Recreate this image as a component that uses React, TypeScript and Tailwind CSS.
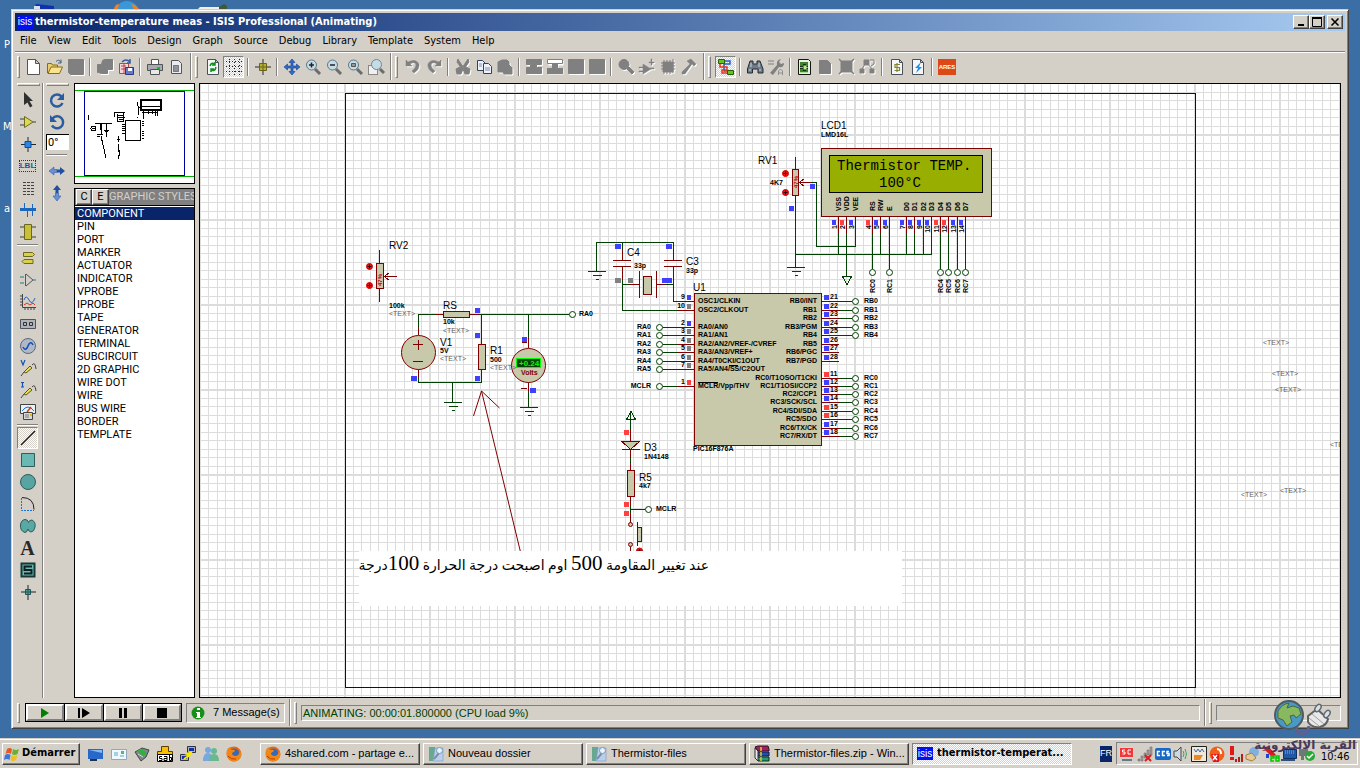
import type { ReactNode } from "react";

const UI = "font-['DejaVu_Sans_Condensed','DejaVu_Sans',sans-serif]";
const HATCH = "bg-[repeating-conic-gradient(#ffffff_0_25%,#d4d0c8_0_50%)] bg-[length:2px_2px]";
const RAISED = "border border-t-white border-l-white border-r-[#404040] border-b-[#404040] bg-[#d4d0c8] shadow-[inset_-1px_-1px_0_#808080]";
const SUNKEN = "border border-t-[#808080] border-l-[#808080] border-r-white border-b-white";

function Icon({ children, size = "size-4" }: { children: ReactNode; size?: string }) {
  return (
    <svg viewBox="0 0 16 16" className={`${size} shrink-0 overflow-visible`} fill="none" aria-hidden="true">
      {children}
    </svg>
  );
}

function Tool({ label, children, pressed = false }: { label: string; children: ReactNode; pressed?: boolean }) {
  return (
    <button
      type="button"
      aria-label={label}
      className={`flex h-[22px] w-[21px] shrink-0 items-center justify-center ${pressed ? `${SUNKEN} ${HATCH}` : ""}`}
    >
      <Icon>{children}</Icon>
    </button>
  );
}

function Disabled({ label, children }: { label: string; children: ReactNode }) {
  return (
    <Tool label={label}>
      <g transform="translate(1 1)" fill="#fff" stroke="#fff">{children}</g>
      <g fill="#808080" stroke="#808080">{children}</g>
    </Tool>
  );
}

function Sep() {
  return (
    <span className="flex w-2 shrink-0 justify-center">
      <span className="h-[18px] w-[2px] border-l border-[#808080] bg-white" />
    </span>
  );
}

function Grip({ h = "h-[22px]" }: { h?: string }) {
  return <span className={`${h} w-[3px] shrink-0 border border-t-white border-l-white border-r-[#808080] border-b-[#808080]`} />;
}

function BandEnd() {
  return (
    <span className="flex w-4 shrink-0 items-center justify-between pl-1 pr-1">
      <span className="h-[27px] w-[2px] border-l border-[#808080] bg-white" />
      <Grip />
    </span>
  );
}

const Page = () => <path d="M2.500.500h8l3 3v12h-11z M10.500.500v3h3" fill="#f4f6fa" stroke="#4a5058" />;

const Lens = ({ children }: { children?: ReactNode }) => (
  <>
    <path d="M10 10l5 5" stroke="#6c6c6c" strokeWidth="3" />
    <circle cx="6.500" cy="6" r="5" fill="#c4dce8" stroke="#5f7684" />
    {children}
  </>
);

function MainToolbar() {
  return (
    <div className="flex h-[30px] items-center overflow-hidden pb-[3px]" role="toolbar" aria-label="Main toolbar">
      <span className="flex w-2 shrink-0 pl-[2px]"><Grip /></span>
      <Tool label="New"><path d="M1.500.500h8l4 4v11h-12z M9.500.500v4h4" fill="#fff" stroke="#555" /></Tool>
      <Tool label="Open">
        <path d="M.500 14V4.500h4l1 1.500h5v3" fill="#e8d070" stroke="#8a6a10" />
        <path d="M1 14.500L4 8h11.500l-3 6.500z" fill="#f8e48c" stroke="#8a6a10" />
        <path d="M9 2.500q3-3 5 1m0-3v3.500h-3" stroke="#406080" />
      </Tool>
      <Disabled label="Save"><path d="M.500.500h15v15h-13l-2-2z" /></Disabled>
      <Sep />
      <Disabled label="Import section"><path d="M5.500 1.500l2-1h8v10h-5v4h-6l-4-1v-8h4z" /></Disabled>
      <Tool label="Export section">
        <path d="M1.500 4.500h9v10h-9z" fill="#f3dada" stroke="#b04848" />
        <path d="M4 3Q8-1 12 3m0-3v4H9" stroke="#2f5ca8" strokeWidth="1.500" />
        <path d="M3 7h5M3 10h5M6 5v9" stroke="#c04040" />
        <path d="M7.500 8.500h8v7h-8z" fill="#6878d0" stroke="#303878" />
        <path d="M10 9h4v3h-4z" fill="#fff" />
      </Tool>
      <Sep />
      <Tool label="Print">
        <path d="M4.500.500h7v5h-7z" fill="#fff" stroke="#555" />
        <path d="M.500 5.500h15v6H.500z" fill="#a8acb0" stroke="#505458" />
        <path d="M3.500 10.500h9v5h-9z" fill="#e8e8e8" stroke="#505458" />
        <path d="M10 8h3v2h-3z" fill="#18c018" />
      </Tool>
      <Tool label="Set print area">
        <path d="M3.500 1.500h7l3 3v10h-10z" fill="#e8ecf0" stroke="#555" />
        <path d="M5.500 6.500h5v6h-5z" fill="#909498" stroke="#333" strokeDasharray="1 1" />
      </Tool>
      <BandEnd />
      <Tool label="Redraw">
        <Page />
        <path d="M5 7q1-4 5-2m0-2v3H7M11 8q-1 5-5 3m0 2v-3h3" stroke="#10901c" strokeWidth="1.500" />
      </Tool>
      <Tool label="Toggle grid" pressed>
        <path d="M0 2.500h16M0 7.500h16M0 12.500h16" stroke="#222" strokeDasharray="1 2" />
        <path d="M3.500 0v16M8.500 0v16M13.500 0v16" stroke="#222" strokeDasharray="1 2" />
      </Tool>
      <Sep />
      <Tool label="False origin">
        <path d="M8 0v16M0 8h16" stroke="#2c2c20" />
        <path d="M4.500 4.500h7v7h-7z" fill="#b8b030" stroke="#68641c" />
        <path d="M8 5v6M5 8h6" stroke="#68641c" />
      </Tool>
      <Sep />
      <Tool label="Pan">
        <path d="M8 0l3 3.500H9V7h3.500V5L16 8l-3.500 3V9H9v3.500h2L8 16l-3-3.500h2V9H3.500v2L0 8l3.500-3v2H7V3.500H5z" fill="#2e6cd0" stroke="#163c84" strokeWidth=".6" />
      </Tool>
      <Tool label="Zoom in"><Lens><path d="M4 6h5M6.500 3.500v5" stroke="#222" strokeWidth="1.500" /></Lens></Tool>
      <Tool label="Zoom out"><Lens><path d="M4 6h5" stroke="#222" strokeWidth="1.500" /></Lens></Tool>
      <Tool label="Zoom all"><Lens><path d="M4.500 4.500h4v3h-4z" fill="#999" stroke="#555" /></Lens></Tool>
      <Tool label="Zoom area">
        <path d="M.500 6.500h9v9h-9z" fill="#f0f0f0" stroke="#333" strokeDasharray="1 1" />
        <path d="M12 10l4 4" stroke="#6c6c6c" strokeWidth="3" />
        <circle cx="8.500" cy="5.500" r="5" fill="#c4dce8" stroke="#6e8696" />
      </Tool>
      <BandEnd />
      <Disabled label="Undo"><path d="M1 1v6h6L5 5q5-3 6 1 0 3-4 6l2 2q6-4 5-9-3-6-11-2z" strokeWidth=".5" /></Disabled>
      <Disabled label="Redo"><path d="M15 1v6H9l2-2Q6 2 5 6q0 3 4 6l-2 2Q1 10 2 5q3-6 11-2z" strokeWidth=".5" /></Disabled>
      <Sep />
      <Disabled label="Cut">
        <path d="M3 0l6 9-2 1L2 3zM13 0L7 9l2 1 5-7z" />
        <path d="M1 10l4-2 3 2-2 5H2zM15 10l-4-2-3 2 2 5h4z" />
      </Disabled>
      <Tool label="Copy">
        <path d="M1.500 1.500h5l3 3v7h-8z" fill="#eef2f8" stroke="#304060" />
        <path d="M7.500 4.500h5l3 3v7h-8z" fill="#eef2f8" stroke="#304060" />
        <path d="M3 5h3M3 7h3M9 9h5M9 11h5" stroke="#7890b0" />
      </Tool>
      <Disabled label="Paste"><path d="M1 3l4-2h5l2 2v3l3 3v6H7l-1-2H1z" /></Disabled>
      <Sep />
      <Disabled label="Block copy"><path d="M.500.500h15v5h-5v3h5v6H.500v-6h4v-3h-4z" /></Disabled>
      <Tool label="Block move">
        <path d="M1.500 1.500h15v5h-5v3h5v6h-15v-6h4v-3h-4z" fill="#fff" />
        <path d="M.500.500h15v4H.500z" stroke="#808080" fill="#fff" />
        <path d="M5 4h6v5h5v6H0V9h5z" fill="#808080" />
      </Tool>
      <Disabled label="Block rotate"><path d="M.500.500h15v14H.500z" /></Disabled>
      <Disabled label="Block delete"><path d="M.500.500h15v14H.500z" /></Disabled>
      <Sep />
      <Disabled label="Pick parts"><circle cx="6" cy="5.500" r="5" /><path d="M9 10l2-2 5 5-2 2z" /></Disabled>
      <Disabled label="Make device"><path d="M4 5l8 5-8 5zM0 8h4v1H0zM0 12h4v1H0zM11 9h4v1h-4zM12 0h1v6h-1zM10 3h5v1h-5z" strokeWidth=".5" /></Disabled>
      <Disabled label="Packaging tool">
        <path d="M3 3h10v10H3z" />
        <path d="M1 4h14M1 7h14M1 10h14M4 1v14M7 1v14M10 1v14M13 0v14" />
      </Disabled>
      <Disabled label="Decompose"><path d="M6 2l4-2 5 5-2 2-2-2-7 10-3 0 0-2 8-8z" strokeWidth=".5" /></Disabled>
      <BandEnd />
      <Tool label="Wire autorouter" pressed>
        <path d="M6 2h6v3H6v7h4" stroke="#2060c8" strokeWidth="1.500" />
        <path d="M2 5v3h7v3H4v3h6" stroke="#e03818" strokeWidth="1.500" />
        <path d="M.500.500h6v4h-6zM9.500 11.500h6v4h-6z" fill="#60c820" stroke="#286008" />
      </Tool>
      <Sep />
      <Tool label="Search and tag">
        <path d="M3 2h3v3h4V2h3l3 8v4h-5v-4H5.500v4H.500v-4z" fill="#707c88" stroke="#222c38" />
        <path d="M2 11h2M12 11h2M4 4v4M12 4v4" stroke="#d0d8e0" />
      </Tool>
      <Tool label="Property assignment">
        <path d="M0 2h6M0 5h6" stroke="#808080" />
        <path d="M2 14l7-8q-1-5 4-6l-2 3 2 2 3-1q0 5-5 4l-6 8z" fill="#808080" />
        <path d="M10.500 16v-4l2-2 2 2v4m-4-2h4" stroke="#909090" />
      </Tool>
      <Sep />
      <Tool label="Design explorer">
        <path d="M1.500.500h10l2 2v13h-12z" fill="#e8f0e8" stroke="#101810" />
        <path d="M3 3h8v10H3z" fill="#183018" />
        <path d="M3 4h8M3 6h3M3 8.500h3M3 11h3M9 6h2M9 8.500h2M9 11h2M3 13h8" stroke="#68d048" />
        <path d="M6.500 6.500h3v4h-3z" fill="#b0f080" />
      </Tool>
      <Disabled label="New sheet"><path d="M1.500 1.500h8l3 3v10h-11z" /></Disabled>
      <Disabled label="Remove sheet"><path d="M2 2h11v11H2z" /><path d="M0 0l15 15M15 0L0 15" strokeWidth="1.500" /></Disabled>
      <Disabled label="Exit to parent">
        <path d="M4 1h5v5H4zM0 10h4v4H0zM10 10h4v4h-4z" />
        <path d="M2 10l3-5M8 5l4 5M10 1h4v4l-3 2" fill="none" />
      </Disabled>
      <Sep />
      <Tool label="Bill of materials">
        <Page />
        <path d="M11 5.500H6v3h4.500v3h-5M8 4v9" stroke="#86842c" strokeWidth="1.200" />
      </Tool>
      <Tool label="Electrical rules check">
        <Page />
        <path d="M11 3L5 9h3l-2 5 6-6H9z" fill="#2090e8" />
      </Tool>
      <Sep />
      <button type="button" aria-label="Netlist to ARES" className="ml-[2px] flex h-4 w-[18px] shrink-0 items-center justify-center bg-[#dc4818] font-['Liberation_Sans',sans-serif] text-[6px] leading-4 font-bold text-white">
        ARES
      </button>
    </div>
  );
}

function ModeButton({ label, children, pressed = false }: { label: string; children: ReactNode; pressed?: boolean }) {
  return (
    <button
      type="button"
      aria-label={label}
      className={`flex h-[22px] w-[21px] shrink-0 items-center justify-center ${pressed ? `${SUNKEN} ${HATCH}` : ""}`}
    >
      <Icon>{children}</Icon>
    </button>
  );
}

const HLine = () => <span className="h-[2px] w-[21px] shrink-0 border-t border-[#808080] bg-white" />;
const HGrip = () => <span className="h-[3px] w-[23px] shrink-0 border border-t-white border-l-white border-r-[#808080] border-b-[#808080]" />;

function ModeColumn() {
  return (
    <div className="flex w-[29px] shrink-0 flex-col items-start border-r border-white pl-[2px] shadow-[inset_-1px_0_0_#808080]" role="toolbar" aria-label="Modes">
      <HGrip />
      <div className="flex flex-col pt-[3px]">
        <ModeButton label="Selection"><path d="M4 0l9 9H9.500l3 5-2.500 1.500-2.500-5L4 13z" fill="#303030" /></ModeButton>
        <ModeButton label="Component"><path d="M0 5h4M0 11h4M13 8h3" stroke="#404030" /><path d="M4.500 2.500L13 8l-8.500 5.500z" fill="#dcd850" stroke="#6c6820" /></ModeButton>
        <ModeButton label="Junction dot"><path d="M8 1v15M1 8.500h15" stroke="#202830" /><path d="M5 5.500h6v6H5z" fill="#2888e8" stroke="#104c98" /></ModeButton>
        <button type="button" className="flex h-[22px] w-[21px] items-center justify-center">
          <span className="border border-dotted border-[#333] font-['Liberation_Sans',sans-serif] text-[8px] leading-[10px] font-bold text-[#1058a8]">LBL</span>
        </button>
        <ModeButton label="Text script"><path d="M3 2.500h11M3 5.500h11M3 8.500h11M3 11.500h11M3 14.500h11" stroke="#444" strokeDasharray="3 1" /></ModeButton>
        <ModeButton label="Bus"><path d="M0 7.500h16" stroke="#1868c0" strokeWidth="3" /><path d="M4.500 1v6M7.500 8v7M12.500 2v12" stroke="#1868c0" /></ModeButton>
        <ModeButton label="Subcircuit"><path d="M0 3h16M0 13h16" stroke="#404030" /><path d="M4.500.500h7v15h-7z" fill="#c8c038" stroke="#6c6820" /></ModeButton>
      </div>
      <div className="flex py-px"><HLine /></div>
      <div className="flex flex-col">
        <ModeButton label="Terminal"><path d="M3.500 2.500h9l2 2-2 2h-9zM4 9.500h9v4H4l-2-2z" fill="#d8d048" stroke="#6c6820" /></ModeButton>
        <ModeButton label="Device pin"><path d="M0 5h4M0 11h4M13 8h3" stroke="#188080" /><path d="M5.500 2v12M6 2l7 6-7 6" stroke="#505860" /></ModeButton>
        <ModeButton label="Graph"><path d="M2.500 0v13.500H16M0 2h2M0 5h2M0 8h2M0 11h2M5 14v2M8 14v2M11 14v2M14 14v2" stroke="#444" /><path d="M4 6q2-6 5 0t6-2" stroke="#1868d0" /><path d="M4 11l3-2 3 2 3-2 2 2" stroke="#d83818" /></ModeButton>
        <ModeButton label="Tape recorder"><path d="M.500 3.500h15v9H.500z" fill="#b0b4b8" stroke="#50545c" /><path d="M3.500 6.500h3v3h-3zM9.500 6.500h3v3h-3z" stroke="#333" /></ModeButton>
        <ModeButton label="Generator"><circle cx="8" cy="8" r="7.500" fill="#b0b8c8" stroke="#606878" /><path d="M3 9q2 4 4 1l2-4q2-3 4 1" stroke="#1050b8" strokeWidth="1.500" /></ModeButton>
        <ModeButton label="Voltage probe"><path d="M1 0l2 5 2-5" stroke="#1050b8" strokeWidth="1.200" /><path d="M1 16l3-4M12 5q3-4 4 4" stroke="#444" /><path d="M4 12l6-6 2 2-6 5z" fill="#e8e050" stroke="#5c5820" /></ModeButton>
        <ModeButton label="Current probe"><path d="M1 .500h3M2.500 0v5M1 5h3" stroke="#1050b8" strokeWidth="1.200" /><path d="M1 16l3-4M12 5q3-4 4 4" stroke="#444" /><path d="M4 12l6-6 2 2-6 5z" fill="#e8e050" stroke="#5c5820" /></ModeButton>
        <ModeButton label="Virtual instruments"><path d="M.500.500h15v9H.500z" fill="#e8f0f8" stroke="#444" /><path d="M2 7q6-8 12 0" stroke="#2070d0" /><path d="M7 8l4-5" stroke="#d83818" strokeWidth="1.500" /><path d="M3.500 8.500h9v7h-9z" fill="#d8d8d8" stroke="#444" /><path d="M5 11h4M5 13h4" stroke="#777" /><path d="M10 10h2v2h-2z" fill="#e0c000" /></ModeButton>
      </div>
      <div className="flex py-px"><HLine /></div>
      <div className="flex flex-col">
        <ModeButton label="Line" pressed><path d="M1 15L15 1" stroke="#202020" strokeWidth="1.500" /></ModeButton>
        <ModeButton label="Box"><path d="M1.500 1.500h13v13h-13z" fill="#68b8b4" stroke="#305c5c" /></ModeButton>
        <ModeButton label="Circle"><circle cx="8" cy="8" r="7.500" fill="#58a4a0" stroke="#305c5c" /></ModeButton>
        <ModeButton label="Arc"><path d="M1.500 2v12.500H14" stroke="#2070d0" strokeDasharray="2 1" /><path d="M2 1.500q12 0 12 12" stroke="#202020" /></ModeButton>
        <ModeButton label="Path"><path d="M5 1.500q3 0 3.500 3Q9 2 12 2q4 2 3 7-1 5-4 5-2 0-3-3-1 3.500-3 3.500Q0 13 .500 7 1 2 5 1.500z" fill="#58a8a4" stroke="#305c5c" /></ModeButton>
        <button type="button" className="flex h-[22px] w-[21px] items-center justify-center font-['Liberation_Serif',serif] text-[20px] leading-5 font-bold text-[#282828]">A</button>
        <ModeButton label="Symbol"><path d="M1.500 1.500h13v13h-13z" fill="#68b8b4" stroke="#183838" strokeWidth="2" /><path d="M12 4.500H4.500V8h7v3.500H4" stroke="#102020" strokeWidth="2" /></ModeButton>
        <ModeButton label="Marker"><path d="M8 1v15M1 8h15" stroke="#222" /><path d="M5.500 5.500h5v5h-5z" fill="#48a8a4" stroke="#205454" /><path d="M8 5v6M5 8h6" stroke="#205454" /></ModeButton>
      </div>
    </div>
  );
}

function OrientColumn() {
  return (
    <div className="flex w-[30px] shrink-0 flex-col items-start pl-[2px]" role="toolbar" aria-label="Orientation">
      <HGrip />
      <div className="flex flex-col pt-[3px]">
        <Tool label="Rotate clockwise"><path d="M12.500 4.500A6 6 0 1 0 13.500 11" stroke="#2c5ca0" strokeWidth="2.500" /><path d="M15 1v7H8z" fill="#2c5ca0" /></Tool>
        <Tool label="Rotate anti-clockwise"><path d="M3.500 4.500A6 6 0 1 1 3 11.500" stroke="#2c5ca0" strokeWidth="2.500" /><path d="M1 1v7h7z" fill="#2c5ca0" /></Tool>
      </div>
      <input aria-label="Rotation angle" defaultValue="0°" className="mt-px h-4 w-[23px] border-t border-l border-black bg-white p-0 pl-px font-['Roboto',sans-serif] text-[11px] leading-4 text-black outline-none" />
      <div className="flex py-1"><HLine /></div>
      <Tool label="Flip horizontally"><path d="M0 8l5-4v2.500h3v3H5V12z" fill="#6890d8" stroke="#385c9c" strokeWidth=".6" /><path d="M16 8l-5-4v2.500H8v3h3V12z" fill="#2050a0" /></Tool>
      <Tool label="Flip vertically"><path d="M8 0L4 5h2.500v3h3V5H12z" fill="#2050a0" /><path d="M8 16l-4-5h2.500V8h3v3H12z" fill="#6890d8" stroke="#385c9c" strokeWidth=".6" /></Tool>
    </div>
  );
}

function Overview() {
  return (
    <div className="border border-black bg-white">
      <svg viewBox="75 84 119 99" className="block w-full" fill="none" shapeRendering="crispEdges" role="img" aria-label="Sheet overview">
        <path d="M75 90.500h119M75 176.500h119" stroke="#00b400" />
        <rect x="84.500" y="91.500" width="100" height="84" stroke="#0000a0" />
        <g stroke="#000">
          <rect x="140.500" y="99.500" width="20" height="10" strokeWidth="2" />
          <path d="M141 106.500h19M137.500 102v4M138 107h3M138.500 106v9M142 112h16M143.500 110v9M148 111v3M152 111v3M155 111v5M157 111v5M137 117h1" />
          <rect x="125.500" y="120.500" width="15" height="20" />
          <path d="M122 124h3M122 126h3M122 128h3M122 130h3M122 133h3M142 121h2M142 123h2M142 125h2M142 131h2M142 133h2M142 135h2M142 138h2" />
          <path d="M88.500 115v5M95 123.500h17M92 128h3M101.500 124v11M97 134h6M100.500 124v6M106.500 124v13M104 130h5M105 131h3M97 136h3" strokeWidth="1" />
          <circle cx="93.500" cy="128.500" r="2.500" />
          <path d="M114.500 112.500h10M114.500 112v5M117 115h6M117 117h8M117.500 114v7h6M119 119h4M123.500 113v9" />
          <path d="M101 136l5 22M118.500 136v6M117 139h3M118.500 144v8M119.500 150v6M118.500 155v4" />
        </g>
      </svg>
    </div>
  );
}

const STYLES = ["COMPONENT", "PIN", "PORT", "MARKER", "ACTUATOR", "INDICATOR", "VPROBE", "IPROBE", "TAPE", "GENERATOR", "TERMINAL", "SUBCIRCUIT", "2D GRAPHIC", "WIRE DOT", "WIRE", "BUS WIRE", "BORDER", "TEMPLATE"];

function StylePanel() {
  return (
    <div className="flex flex-1 flex-col border border-black bg-white font-['Roboto','Liberation_Sans',sans-serif] text-[11px] leading-[13px] text-black">
      <div className="flex h-[17px] overflow-hidden border-b border-black bg-[#808080] pl-px">
        <button type="button" className={`h-4 w-4 shrink-0 leading-[14px] ${RAISED}`}>C</button>
        <button type="button" className={`h-4 w-[17px] shrink-0 leading-[14px] ${RAISED}`}>E</button>
        <span className="flex-1 text-center leading-4 whitespace-nowrap text-[#d4d0c8]">GRAPHIC STYLES</span>
      </div>
      <ul className="pt-px">
        {STYLES.map((s, i) => (
          <li key={s} className={i === 0 ? "bg-[#0a246a] text-white" : ""}>
            <button type="button" className="block h-[13px] w-full pl-[2px] text-left">{s}</button>
          </li>
        ))}
      </ul>
    </div>
  );
}

/* ---------- schematic ---------- */

const BLUE = "#4040ff";
const RED = "#ff4040";
const GREY = "#808080";
const BODY = "#c8c8aa";
const WIRE = "#004000";
const PART = "#800000";

const Sq = ({ x, y, c = BLUE, w = 5 }: { x: number; y: number; c?: string; w?: number }) => (
  <rect x={x} y={y} width={w} height="5" fill={c} />
);
const Big = ({ x, y, children }: { x: number; y: number; children: ReactNode }) => (
  <text x={x} y={y} className="text-[10px]">{children}</text>
);
const Small = ({ x, y, end = false, children }: { x: number; y: number; end?: boolean; children: ReactNode }) => (
  <text x={x} y={y} textAnchor={end ? "end" : "start"} className="text-[7px] font-bold">{children}</text>
);
const Placeholder = ({ x, y }: { x: number; y: number }) => (
  <text x={x} y={y} className="fill-[#606060] text-[7px]">&lt;TEXT&gt;</text>
);
const Ground = ({ x, y }: { x: number; y: number }) => (
  <path d={`M${x - 9} ${y}h18M${x - 4} ${y + 4}h9M${x - 1} ${y + 8}h3`} stroke={WIRE} />
);
const Knob = ({ x, y }: { x: number; y: number }) => (
  <g>
    <circle cx={x} cy={y} r="3" fill="#f01010" stroke="#d00000" />
    <path d={`M${x - 2} ${y}h4M${x} ${y - 2}v4`} stroke="#300000" />
  </g>
);
const Pin = ({ x, y }: { x: number; y: number }) => <circle cx={x} cy={y} r="3" stroke={WIRE} fill="#fff" shapeRendering="auto" />;

const LEFT_PINS: { y: number; n: string; t: string; c: string; net?: string }[] = [
  { y: 301.5, n: "9", t: "OSC1/CLKIN", c: BLUE },
  { y: 310.5, n: "10", t: "OSC2/CLKOUT", c: GREY },
  { y: 327.5, n: "2", t: "RA0/AN0", c: BLUE, net: "RA0" },
  { y: 335.5, n: "3", t: "RA1/AN1", c: GREY, net: "RA1" },
  { y: 344.5, n: "4", t: "RA2/AN2/VREF-/CVREF", c: GREY, net: "RA2" },
  { y: 352.5, n: "5", t: "RA3/AN3/VREF+", c: GREY, net: "RA3" },
  { y: 361.5, n: "6", t: "RA4/T0CKI/C1OUT", c: GREY, net: "RA4" },
  { y: 369.5, n: "7", t: "RA5/AN4/SS/C2OUT", c: GREY, net: "RA5" },
  { y: 386.5, n: "1", t: "MCLR/Vpp/THV", c: RED, net: "MCLR" },
];

const RIGHT_PINS: { y: number; n: string; t: string; c: string; net?: string }[] = [
  { y: 301.5, n: "21", t: "RB0/INT", c: BLUE, net: "RB0" },
  { y: 310.5, n: "22", t: "RB1", c: BLUE, net: "RB1" },
  { y: 318.5, n: "23", t: "RB2", c: BLUE, net: "RB2" },
  { y: 327.5, n: "24", t: "RB3/PGM", c: BLUE, net: "RB3" },
  { y: 335.5, n: "25", t: "RB4", c: BLUE, net: "RB4" },
  { y: 344.5, n: "26", t: "RB5", c: BLUE },
  { y: 352.5, n: "27", t: "RB6/PGC", c: BLUE },
  { y: 361.5, n: "28", t: "RB7/PGD", c: BLUE },
  { y: 378.5, n: "11", t: "RC0/T1OSO/T1CKI", c: RED, net: "RC0" },
  { y: 386.5, n: "12", t: "RC1/T1OSI/CCP2", c: BLUE, net: "RC1" },
  { y: 394.5, n: "13", t: "RC2/CCP1", c: BLUE, net: "RC2" },
  { y: 402.5, n: "14", t: "RC3/SCK/SCL", c: BLUE, net: "RC3" },
  { y: 411.5, n: "15", t: "RC4/SDI/SDA", c: RED, net: "RC4" },
  { y: 419.5, n: "16", t: "RC5/SDO", c: RED, net: "RC5" },
  { y: 428.5, n: "17", t: "RC6/TX/CK", c: BLUE, net: "RC6" },
  { y: 436.5, n: "18", t: "RC7/RX/DT", c: BLUE, net: "RC7" },
];

const LCD_PINS: { x: number; t: string; c: string; to: number; net?: string }[] = [
  { x: 838.5, t: "VSS", c: BLUE, to: 255 },
  { x: 846.5, t: "VDD", c: RED, to: 277 },
  { x: 855.5, t: "VEE", c: BLUE, to: 247 },
  { x: 872.5, t: "RS", c: RED, to: 269, net: "RC0" },
  { x: 880.5, t: "RW", c: BLUE, to: 255 },
  { x: 889.5, t: "E", c: BLUE, to: 269, net: "RC1" },
  { x: 906.5, t: "D0", c: BLUE, to: 255 },
  { x: 914.5, t: "D1", c: BLUE, to: 255 },
  { x: 923.5, t: "D2", c: BLUE, to: 255 },
  { x: 931.5, t: "D3", c: BLUE, to: 255 },
  { x: 940.5, t: "D4", c: RED, to: 269, net: "RC4" },
  { x: 948.5, t: "D5", c: RED, to: 269, net: "RC5" },
  { x: 957.5, t: "D6", c: BLUE, to: 269, net: "RC6" },
  { x: 965.5, t: "D7", c: BLUE, to: 269, net: "RC7" },
];

const Up = ({ x, y, end = false, children }: { x: number; y: number; end?: boolean; children: ReactNode }) => (
  <text transform={`translate(${x} ${y}) rotate(-90)`} textAnchor={end ? "end" : "start"} className="text-[7px] font-bold">{children}</text>
);

function Schematic() {
  return (
    <svg viewBox="200 84 1140 613" className="block w-full font-['Liberation_Sans',sans-serif]" fill="none" shapeRendering="crispEdges" role="img" aria-label="Thermistor schematic">
      <defs>
        <pattern id="grid" x="259" y="134" width="85" height="85" patternUnits="userSpaceOnUse">
          <path d="M9.500 0v85M17.500 0v85M26.500 0v85M34.500 0v85M43.500 0v85M51.500 0v85M60.500 0v85M68.500 0v85M77.500 0v85M0 9.500h85M0 17.500h85M0 26.500h85M0 34.500h85M0 43.500h85M0 51.500h85M0 60.500h85M0 68.500h85M0 77.500h85" stroke="#dcdcdc" />
          <path d="M1 0v85M0 1h85" stroke="#dcdcdc" strokeWidth="2" />
        </pattern>
      </defs>
      <rect x="200" y="84" width="1140" height="613" fill="#fff" />
      <rect x="200" y="84" width="1140" height="613" fill="url(#grid)" />
      <rect x="345.500" y="93.500" width="850" height="594" stroke="#0000a0" />

      <g stroke={WIRE}>
        <path d="M418.500 328V314.500H436M479 314.500h90M481.500 314v22M528.500 314v26M418.500 377v5.500h63V377M452.500 382v20M528.500 391v16" />
        <path d="M596.500 271V242.500h77V250M622.500 242v8M622.500 278v32.500H678M673.500 278v23H682M622 284.500h9M665 284.500h9" />
        <path d="M795.500 204v63M795 254.500h137M812 182.500h4.500v64h39M630.500 412v18M626.500 419.500h9l-4.500-8zM630.500 457v6M630 509.500h15M630.500 505v9" />
        <path d="M842.500 276.500h9l-4.500 8z" />
      </g>
      <g stroke={PART}>
        <path d="M418.500 327v8M418.500 369v8M435 314.500h45M481.500 336v42M528.500 338v10M528.500 382v9M521 388.500h6M522 342.500h5" />
        <path d="M379.500 250v52M384 276.500h13M389 273l-5 3.500 5 3.500" />
        <path d="M622.500 249v11.500M613 260.500h18M613 266.500h18M622.500 267v13M673.500 249v11.500M664 260.500h18M664 266.500h18M673.500 267v13M629 284.500h10M657 284.500h9M639.500 271v27M656.500 271v27" />
        <path d="M795.500 157v47M799 182.500h13M804 179l-5 3.500 5 3.500" />
        <path d="M630.500 430v28M630.500 463v43M630.500 514v9M630.500 546v6M637.500 522v24M622 449.500h18" />
      </g>
      <g stroke={PART} fill={BODY}>
        <rect x="376.500" y="263.500" width="7" height="25" />
        <rect x="443.500" y="311.500" width="26" height="6" />
        <rect x="478.500" y="344.500" width="7" height="25" />
        <rect x="643.500" y="276.500" width="8" height="18" />
        <rect x="792.500" y="169.500" width="6" height="26" />
        <rect x="627.500" y="470.500" width="7" height="26" />
        <rect x="637.500" y="527.500" width="4" height="14" />
        <rect x="694.500" y="293.500" width="127" height="152" />
        <rect x="821.500" y="148.500" width="170" height="68" />
        <path d="M622 441.500h17.500l-9 8z" />
        <g shapeRendering="auto">
          <circle cx="418.500" cy="352.500" r="17" />
          <circle cx="528.500" cy="365.500" r="17" />
          <circle cx="630.500" cy="524.500" r="2" />
          <circle cx="630.500" cy="544.500" r="2" />
        </g>
      </g>
      <path d="M413 344.500h10M418.500 340v10M413 361.500h10" stroke={PART} />
      <rect x="829.500" y="155.500" width="153" height="37" fill="#98ae00" stroke="#000" />
      <rect x="516.500" y="358.500" width="24" height="9" fill="#004000" stroke="#00ff00" />
      <text x="519" y="366" className="fill-[#00ff00] text-[8px] font-bold">+0.24</text>
      <text x="521" y="375" className="fill-[#800000] text-[7px] font-bold">Volts</text>
      <text transform="translate(382 286) rotate(-90)" className="fill-[#c00000] text-[6px] font-bold">47%</text>
      <text transform="translate(798 188) rotate(-90)" className="fill-[#c00000] text-[6px] font-bold">47%</text>

      <g className="fill-black font-['Liberation_Mono',monospace] text-[14px]" shapeRendering="auto">
        <text x="837" y="170">Thermistor TEMP.</text>
        <text x="879" y="187">100°C</text>
      </g>

      <Ground x={452.5} y={402.5} />
      <Ground x={528.5} y={407.5} />
      <Ground x={596.5} y={271.5} />
      <Ground x={795.5} y={267.5} />
      <g shapeRendering="auto">
        <Knob x={369.5} y={266.5} />
        <Knob x={369.5} y={285.5} />
        <Knob x={785.5} y={173.5} />
        <Knob x={785.5} y={192.5} />
        <Knob x={639.5} y={551} />
      </g>
      <path d="M473.500 416l8-25 18 17M481.500 391l39 161" stroke={PART} shapeRendering="auto" />

      <Sq x={411} y={376} w={6} />
      <Sq x={475} y={308} />
      <Sq x={475} y={333} />
      <Sq x={475} y={376} />
      <Sq x={522} y={337} />
      <Sq x={530} y={388} w={6} />
      <Sq x={615} y={244} w={6} />
      <Sq x={666} y={244} w={6} />
      <Sq x={615} y={278} c={GREY} w={6} />
      <Sq x={628} y={278} c={GREY} />
      <Sq x={662} y={278} w={10} />
      <Sq x={810} y={184} />
      <Sq x={789} y={206} />
      <Sq x={624} y={430} c={RED} />
      <Sq x={624} y={502} c={RED} />
      <Sq x={624} y={511} c={RED} />

      <Pin x={572.5} y={314.5} />
      <Pin x={648.5} y={509.5} />

      <g className="fill-black">
        {LEFT_PINS.map((p) => (
          <g key={p.n}>
            <path d={`M678 ${p.y}h16`} stroke={PART} />
            <Sq x={687} y={p.y - 6.5} c={p.c} w={4} />
            <Small x={685} y={p.y - 2.5} end>{p.n}</Small>
            <Small x={698} y={p.y + 1.5}>{p.t}</Small>
            {p.net && (
              <>
                <path d={`M663 ${p.y}h15`} stroke={WIRE} />
                <Pin x={659.5} y={p.y} />
                <Small x={651} y={p.y + 1.5} end>{p.net}</Small>
              </>
            )}
          </g>
        ))}
        {RIGHT_PINS.map((p) => (
          <g key={p.n}>
            <path d={`M822 ${p.y}h17`} stroke={PART} />
            <Sq x={824} y={p.y - 6.5} c={p.c} />
            <Small x={830} y={p.y - 2.5}>{p.n}</Small>
            <Small x={817} y={p.y + 1.5} end>{p.t}</Small>
            {p.net && (
              <>
                <path d={`M839 ${p.y}h13`} stroke={WIRE} />
                <Pin x={855.5} y={p.y} />
                <Small x={864} y={p.y + 1.5}>{p.net}</Small>
              </>
            )}
          </g>
        ))}
        {LCD_PINS.map((p, i) => (
          <g key={p.t}>
            <path d={`M${p.x} 217v17`} stroke={PART} />
            <path d={`M${p.x} 234V${p.to}`} stroke={WIRE} />
            <Sq x={p.x - 6.5} y={220} c={p.c} w={4} />
            <Up x={p.x - 2} y={225} end>{i + 1}</Up>
            <Up x={p.x + 2} y={211}>{p.t}</Up>
            {p.net && (
              <>
                <Pin x={p.x} y={272.5} />
                <Up x={p.x + 2} y={293}>{p.net}</Up>
              </>
            )}
          </g>
        ))}
        <path d="M698 382.500h20M729 365.500h9" stroke="#000" />

        <Big x={389} y={249}>RV2</Big>
        <Small x={389} y={308}>100k</Small>
        <Big x={443} y={309}>RS</Big>
        <Small x={443} y={324}>10k</Small>
        <Small x={579} y={316}>RA0</Small>
        <Big x={440} y={346}>V1</Big>
        <Small x={440} y={353}>5V</Small>
        <Big x={490} y={354}>R1</Big>
        <Small x={490} y={362}>500</Small>
        <Big x={627} y={256}>C4</Big>
        <Small x={634} y={268}>33p</Small>
        <Big x={686} y={265}>C3</Big>
        <Small x={686} y={273}>33p</Small>
        <Big x={693} y={291}>U1</Big>
        <Small x={693} y={451}>PIC16F876A</Small>
        <Big x={821} y={129}>LCD1</Big>
        <Small x={821} y={137}>LMD16L</Small>
        <Big x={758} y={164}>RV1</Big>
        <Small x={770} y={185}>4K7</Small>
        <Big x={644} y={451}>D3</Big>
        <Small x={644} y={459}>1N4148</Small>
        <Big x={639} y={481}>R5</Big>
        <Small x={639} y={488}>4k7</Small>
        <Small x={656} y={511}>MCLR</Small>
      </g>
      <Placeholder x={389} y={316} />
      <Placeholder x={443} y={333} />
      <Placeholder x={440} y={361} />
      <Placeholder x={490} y={370} />
      <Placeholder x={1263} y={345} />
      <Placeholder x={1272} y={376} />
      <Placeholder x={1275} y={392} />
      <Placeholder x={1330} y={447} />
      <Placeholder x={1241} y={497} />
      <Placeholder x={1280} y={493} />
    </svg>
  );
}

/* ---------- bottom bars ---------- */

function Transport({ label, children }: { label: string; children: ReactNode }) {
  return (
    <button type="button" aria-label={label} className="flex h-[17px] w-[38px] items-center justify-center border-2 border-t-white border-l-white border-r-[#808080] border-b-[#808080] bg-[#d4d0c8]">
      <svg viewBox="0 0 12 10" className="h-[10px] w-3" aria-hidden="true">{children}</svg>
    </button>
  );
}

function StatusBar() {
  return (
    <div className="flex h-[27px] items-center pt-[2px] text-[11px]">
      <span className="flex w-[10px] shrink-0 pl-[2px]"><Grip h="h-5" /></span>
      <div className="flex shrink-0 gap-px border border-black bg-black">
        <Transport label="Play"><path d="M2 0l8 5-8 5z" fill="#008000" /></Transport>
        <Transport label="Step"><path d="M0 0h2v10H0zM4 0l8 5-8 5z" /></Transport>
        <Transport label="Pause"><path d="M2 0h3v10H2zM7 0h3v10H7z" /></Transport>
        <Transport label="Stop"><path d="M1 0h10v10H1z" /></Transport>
      </div>
      <div className={`ml-1 flex h-5 w-[99px] shrink-0 items-center gap-2 pl-1 ${SUNKEN}`}>
        <svg viewBox="0 0 14 14" className="size-[14px] shrink-0" aria-hidden="true">
          <circle cx="7" cy="7" r="6.500" fill="#189018" />
          <path d="M6 2h3v2H6zM5 6h4v5h1v1H5v-1h1V7H5z" fill="#fff" />
        </svg>
        <span className="font-['Liberation_Sans',sans-serif]">7 Message(s)</span>
      </div>
      <BandEnd />
      <div className={`h-4 min-w-0 flex-1 pl-px font-['Liberation_Sans',sans-serif] leading-[14px] text-[#004000] ${SUNKEN}`}>
        ANIMATING: 00:00:01.800000 (CPU load 9%)
      </div>
      <BandEnd />
      <div className={`mr-1 h-4 w-[125px] shrink-0 ${SUNKEN}`} />
    </div>
  );
}

const Firefox = () => (
  <>
    <circle cx="8" cy="8" r="7.500" fill="#e86a10" />
    <circle cx="8.500" cy="7" r="4.500" fill="#3868b8" />
    <path d="M.500 6Q1 2 4 1q-1 2 1 3 4-1 4 1l-3 2q0 3 4 3 4-1 4-5 2 3 1 6-3 5-8 4.500Q1 15 .500 6z" fill="#f08818" />
    <path d="M2 10q3 4 8 3" stroke="#c03808" />
  </>
);
const Folder = () => (
  <>
    <path d="M1 1h6v14H1z" fill="#68a890" />
    <path d="M7 2h8v13H5z" fill="#b8d0f0" stroke="#7898c0" strokeWidth=".6" />
    <path d="M6 13l5-6" stroke="#8090a0" strokeWidth="2" />
    <circle cx="11.500" cy="4.500" r="3" fill="#e8f4ff" stroke="#7898b8" />
  </>
);
const Books = () => (
  <>
    <path d="M1 1l3-1h10l1 3v2H4z" fill="#a02060" stroke="#301020" />
    <path d="M3 6h12v4H4z" fill="#2050b0" stroke="#101840" />
    <path d="M3 11h12v4H4z" fill="#20a070" stroke="#083020" />
    <path d="M1 2v10l3 3V5z" fill="#e8e8e8" stroke="#303030" />
    <path d="M7 1v4M7 6v4M7 11v4" stroke="#e8c840" strokeWidth="1.500" />
  </>
);

function IsisMark() {
  return (
    <span className="flex h-[13px] w-4 shrink-0 items-center justify-center bg-[#0010f0] font-['Liberation_Sans',sans-serif] text-[10px] leading-3 font-normal text-white">isis</span>
  );
}

function Task({ icon, children, active = false }: { icon: ReactNode; children: ReactNode; active?: boolean }) {
  return (
    <button type="button" className={`flex h-[22px] max-w-40 min-w-0 flex-1 items-center gap-1 pl-1 text-left whitespace-nowrap ${active ? `${SUNKEN} ${HATCH} font-bold` : `${RAISED} font-['Liberation_Sans',sans-serif]`}`}>
      {icon}
      <span className="truncate">{children}</span>
    </button>
  );
}

const QUICK: { label: string; art: ReactNode }[] = [
  { label: "Show desktop", art: <><path d="M0 3h15v10H0z" fill="#2868c8" /><path d="M1 4h13v3z" fill="#88b8f0" /><path d="M2 13h7v2H2z" fill="#203050" /></> },
  { label: "Mail", art: <><path d="M.500 3.500h15v10H.500z" fill="#f0f8ff" stroke="#90a8b8" /><path d="M3 7h4M3 9h4M9 10h4" stroke="#58a8c8" /><path d="M10 5h3v3h-3z" fill="#60b078" /></> },
  { label: "Remote", art: <><path d="M1 6l7-4 7 2-3 7-5 4z" fill="#808888" stroke="#404848" /><path d="M3 5q4-4 8 0l2 3-4 2z" fill="#30b040" /><path d="M4 8l5 3" stroke="#d0d8d0" /></> },
  { label: "SAB", art: <><path d="M4.500.500h7v5h4v3H.500v-3h4z" fill="#f8c000" stroke="#604000" /><path d="M.500 8.500h15v7H.500z" fill="#fff" stroke="#000" /><path d="M5 10.500H2.500v2H5v2H2M7 10.500h3v4H7v-2h3M12.500 9v5.500h2v-3h-2" stroke="#000" /></> },
  { label: "PuTTY", art: <><path d="M7.500.500h8v6h-8zM.500 8.500h8v6h-8z" fill="#b0b0b8" stroke="#303040" /><path d="M9 2h5v3H9zM2 10h5v3H2z" fill="#1030b0" /><path d="M12 6L7 8l3 1-6 4" stroke="#f8e800" strokeWidth="2" /></> },
  { label: "Messenger", art: <><circle cx="5" cy="4" r="3" fill="#78a8e0" /><path d="M0 15q0-8 5-8t5 8z" fill="#78a8e0" /><circle cx="11" cy="5" r="3" fill="#68b890" /><path d="M6 15q0-7 5-7t5 7z" fill="#68b890" /></> },
  { label: "Firefox", art: <Firefox /> },
];

const TRAY: { label: string; art: ReactNode }[] = [
  { label: "SC", art: <><path d="M.500 1.500h14v10H.500z" fill="#f03838" stroke="#d0d8e8" /><path d="M6 4H3.500v2H6v2H3.500M12 4H9v4h3" stroke="#fff" /><path d="M3 13h10v2H3z" fill="#687888" /></> },
  { label: "Wireless", art: <><path d="M1 13h2v2H1zM4 10h2v5H4zM7 7h2v5H7zM10 4h2v5h-2zM13 1h2v8h-2z" fill="#a0a0a0" stroke="#606060" strokeWidth=".5" /><path d="M8 9l6 6M14 9l-6 6" stroke="#e01818" strokeWidth="2" /></> },
  { label: "CCS", art: <><rect x="0" y="2" width="16" height="12" rx="2" fill="#1868c8" /><path d="M5 5.500H2.500v4H5M10 5.500H7.500v4H10M14 5.500h-2v2h2v2h-2" stroke="#fff" strokeWidth="1.500" /></> },
  { label: "Volume", art: <><path d="M1 5h3l4-4v14l-4-4H1z" fill="#d0d8e0" stroke="#404850" /><path d="M10 5q2 3 0 6M12 3q3 5 0 10" stroke="#48a060" /></> },
  { label: "Java", art: <><path d="M.500.500h15v15H.500z" fill="#f0e8d8" stroke="#202020" /><path d="M3 3l2 3 2-3 2 3 2-3 2 3" stroke="#3068c0" /><path d="M3 9h9l-3 5H3z" fill="#e88828" /></> },
  { label: "Avast", art: <><circle cx="8" cy="8" r="7.500" fill="#f06018" /><path d="M2 8h8v8H4z" fill="#e01818" /><path d="M4 9l4 5M8 9l-4 5" stroke="#fff" strokeWidth="1.500" /><path d="M8 3q4 0 4 5" stroke="#fff" strokeWidth="2" /></> },
  { label: "Alert", art: <><path d="M3 0h4v9H3zM3 11h4v3H3z" fill="#e01818" /><path d="M8 13h2v3H8zM11 11h2v5h-2zM14 8h2v8h-2z" fill="#b02020" /></> },
  { label: "Network", art: <><circle cx="9" cy="6" r="5" fill="#80b0e0" /><path d="M1 9l6-2 4 5-4 3-6-2z" fill="#e8c890" stroke="#a08048" /></> },
  { label: "Temperature", art: <><path d="M0 2l5-2 8 9-4 2z" fill="#e01818" /><path d="M3 8h3v4H3z" fill="#2040e0" /><path d="M7 10h4v2H8v3h3M13 10h3v5h-3zM13 12h3" stroke="#00c800" strokeWidth="1.500" /></> },
  { label: "Display", art: <><path d="M2.500 3.500h13v9h-13z" fill="#2058a8" stroke="#103060" /><path d="M4 5h10M4 7h10" stroke="#80b8f0" strokeDasharray="1 1" /><path d="M0 13h14v2H0z" fill="#305080" /></> },
  { label: "Safely remove", art: <><path d="M0 3h9v7H5v4H2v-4H0z" fill="#707878" /><circle cx="11" cy="10" r="5" fill="#28a838" /><path d="M8 10l2 2 4-4" stroke="#fff" strokeWidth="1.500" /></> },
];

function Taskbar() {
  return (
    <div className={`flex h-[30px] items-center border-t border-[#d4d0c8] bg-[#d4d0c8] pl-[2px] text-[11px] text-black shadow-[inset_0_1px_0_#fff] ${UI}`}>
      <button type="button" className={`flex h-[22px] w-[78px] shrink-0 items-center gap-px pl-[2px] font-bold ${RAISED}`}>
        <Icon>
          <path d="M2 3q3-2 5 0L6 8Q3 6 .500 8z" fill="#e85820" />
          <path d="M8 3q3 2 6 0l-1.500 5q-3 2-5.500 0z" fill="#68b030" />
          <path d="M0 9q3-2 5.500 0L4.500 14Q2 12-1 14z" fill="#3878d8" />
          <path d="M6.500 9q3 2 6 0L11 14q-3 2-5.500 0z" fill="#f0c020" />
        </Icon>
        Démarrer
      </button>
      <div className="flex shrink-0 gap-[7px] pl-2">
        {QUICK.map((q) => (
          <button key={q.label} type="button" aria-label={q.label}><Icon>{q.art}</Icon></button>
        ))}
      </div>
      <div className="ml-[18px] flex min-w-0 flex-1 gap-[3px]">
        <Task icon={<Icon><Firefox /></Icon>}>4shared.com - partage e...</Task>
        <Task icon={<Icon><Folder /></Icon>}>Nouveau dossier</Task>
        <Task icon={<Icon><Folder /></Icon>}>Thermistor-files</Task>
        <Task icon={<Icon><Books /></Icon>}>Thermistor-files.zip - Win...</Task>
        <Task active icon={<IsisMark />}>thermistor-temperat...</Task>
      </div>
      <span className="mr-1 ml-4 flex h-4 w-3 shrink-0 items-center justify-center bg-[#0a246a] font-['Liberation_Sans',sans-serif] text-[9px] text-white">FR</span>
      <div className={`mr-[2px] flex h-[23px] w-[242px] shrink-0 items-center gap-[2px] pl-[2px] ${SUNKEN}`}>
        {TRAY.map((t) => (
          <button key={t.label} type="button" aria-label={t.label}><Icon>{t.art}</Icon></button>
        ))}
        <time className="ml-1 self-end leading-[14px]">10:46</time>
      </div>
    </div>
  );
}

function Watermark() {
  return (
    <div className="pointer-events-none absolute right-1 bottom-4 flex flex-col items-end text-[#483858]">
      <svg viewBox="0 0 60 38" className="mr-[22px] h-[38px] w-[60px]" fill="none" aria-hidden="true">
        <circle cx="15" cy="15" r="14" fill="#4898c8" stroke="#505860" strokeWidth="2" />
        <path d="M4 11q4-7 11-8l-2 5 6-2 6 2 2 6-5 4-2-3-4 1 2 6-5 4-4-6-5-2z" fill="#88b860" stroke="#486838" />
        <path d="M22 28q2 7 6 6 6-1 7-8" stroke="#606090" strokeWidth="3" />
        <path d="M34 16l9-7 11 10q-1 6-8 8-8 1-12-5z" fill="#e8e8e8" stroke="#606060" strokeWidth="2" />
        <path d="M38 14l12 10M35 18l10 8" stroke="#a0a0a0" />
        <ellipse cx="44" cy="8" rx="2.500" ry="4" transform="rotate(35 44 8)" fill="#d8e0e8" stroke="#606870" strokeWidth="1.500" />
        <ellipse cx="53" cy="14" rx="2.500" ry="4" transform="rotate(35 53 14)" fill="#d8e0e8" stroke="#606870" strokeWidth="1.500" />
      </svg>
      <p dir="rtl" lang="ar" className="font-['DejaVu_Sans',sans-serif] text-[12px] leading-[14px] font-bold">القرية الالكترونية</p>
    </div>
  );
}

const MENUS = ["File", "View", "Edit", "Tools", "Design", "Graph", "Source", "Debug", "Library", "Template", "System", "Help"];

function CaptionButton({ label, children }: { label: string; children: ReactNode }) {
  return (
    <button type="button" aria-label={label} className={`flex h-[14px] w-4 items-center justify-center ${RAISED}`}>
      <svg viewBox="0 0 10 10" className="size-[10px]" fill="none" stroke="#000" aria-hidden="true">{children}</svg>
    </button>
  );
}

export default function App() {
  return (
    <div className="relative flex min-h-screen flex-col overflow-hidden bg-[#3a6ea5]">
      <svg viewBox="0 0 240 9" className="absolute top-0 left-0 h-[9px] w-60" aria-hidden="true">
        <path d="M36 4l18 2v3H34z" fill="#1030b0" /><path d="M34 6h6v3h-6z" fill="#d8e0f0" />
        <circle cx="127" cy="13" r="12" fill="#3898d8" /><path d="M114 9q1-5 5-5l-1 5zM131 4l4 1 4 4h-5z" fill="#f08020" />
        <path d="M200 7h24v2h-26z" fill="#f0f0e8" /><path d="M219 7l5-3 3 2v3h-8z" fill="#405838" />
      </svg>
      <div className={`absolute top-0 left-0 text-[11px] leading-4 text-white ${UI}`}>
        <p className="pt-[37px] pl-1">P</p>
        <p className="pt-[66px] pl-[3px]">M</p>
        <p className="pt-[66px] pl-1">a</p>
      </div>

      <main className={`relative mt-[9px] mr-[11px] mb-[9px] ml-[11px] flex flex-1 flex-col border border-t-[#d4d0c8] border-l-[#d4d0c8] border-r-[#404040] border-b-[#404040] bg-[#d4d0c8] p-[3px] text-[11px] text-black shadow-[inset_1px_1px_0_#fff,inset_-1px_-1px_0_#808080] ${UI}`}>
        <header className="flex h-[18px] items-center bg-linear-to-r from-[#0a246a] to-[#a6caf0] pr-[2px] pl-[2px]">
          <IsisMark />
          <h1 className="flex-1 truncate pl-[2px] text-[11px] font-bold text-white">thermistor-temperature meas - ISIS Professional (Animating)</h1>
          <CaptionButton label="Minimize"><path d="M2 8h6" strokeWidth="2" /></CaptionButton>
          <CaptionButton label="Maximize"><path d="M.500 1h9M.500.500v9h9v-9" strokeWidth="1" /><path d="M0 1h10" strokeWidth="2" /></CaptionButton>
          <span className="w-[2px]" />
          <CaptionButton label="Close"><path d="M1.500 1.500l7 7M8.500 1.500l-7 7" strokeWidth="1.600" /></CaptionButton>
        </header>
        <nav className="flex h-5 items-center gap-[11px] pl-[5px]">
          {MENUS.map((m) => (
            <button key={m} type="button">{m}</button>
          ))}
        </nav>
        <div className="h-[2px] border-t border-[#808080] bg-white" />
        <MainToolbar />

        <div className="flex flex-1 pr-1">
          <ModeColumn />
          <OrientColumn />
          <aside className="flex w-[121px] shrink-0 flex-col gap-1">
            <Overview />
            <StylePanel />
          </aside>
          <section className="relative ml-1 min-w-0 flex-1 overflow-hidden border border-black bg-white">
            <Schematic />
            <p dir="rtl" lang="ar" className="absolute top-[467px] left-[159px] h-[55px] w-[543px] bg-white pr-[193px] font-['Liberation_Serif','DejaVu_Sans',serif] text-[14px] leading-6 whitespace-nowrap text-black">
              عند تغيير المقاومة <span className="text-[21px]">500</span> اوم اصبحت درجة الحرارة <span className="text-[21px]">100</span>درجة
            </p>
          </section>
        </div>
        <StatusBar />
      </main>
      <Taskbar />
      <Watermark />
    </div>
  );
}
